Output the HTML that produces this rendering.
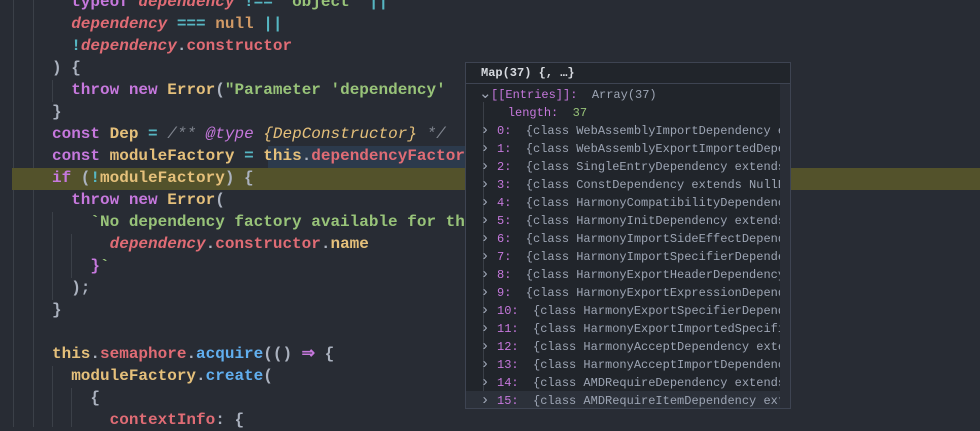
<!DOCTYPE html>
<html><head><meta charset="utf-8"><style>
body{margin:0;width:980px;height:427px;overflow:hidden;background:#282c34;position:relative;font-family:"Liberation Mono",monospace}
.code{position:absolute;left:0;top:-9px;width:980px;font-size:16px;line-height:22px;color:#abb2bf;font-weight:bold}
.l{height:22px;white-space:pre;padding-left:52px;position:relative}
.k{color:#c678dd}.r{color:#e06c75}.y{color:#e5c07b}.g{color:#98c379}.c{color:#56b6c2}.b{color:#61afef}.o{color:#d19a66}.i{font-style:italic}.cm{color:#7f848e;font-style:italic;font-weight:normal}
.guide{position:absolute;width:1px;background:#3b4048}
.hl{position:absolute;left:12px;top:168px;width:968px;height:22px;background:#53522b}
.panel{position:absolute;left:465px;top:62px;width:326px;height:347px;background:#21252b;border:1px solid #3e4452;box-sizing:border-box;font-size:12px;overflow:hidden}
.ph{height:20px;line-height:20px;padding-left:15px;color:#d7dae0;font-weight:bold;border-bottom:1px solid #3e4452;white-space:pre}
.pr{height:18px;line-height:18px;white-space:pre;color:#9da5b4}
.pk{color:#c678dd}
.pn{color:#98c379}
.ar{color:#9da5b4;display:inline-block;width:12px;margin-right:6px;text-align:center;font-size:15px;vertical-align:top}
</style></head><body>
<div class="guide" style="left:13px;top:0;height:427px"></div>
<div class="guide" style="left:33px;top:0;height:427px"></div>
<div class="guide" style="left:52px;top:80px;height:22px"></div>
<div class="guide" style="left:52px;top:212px;height:88px"></div>
<div class="guide" style="left:71px;top:234px;height:44px"></div>
<div class="guide" style="left:52px;top:366px;height:61px"></div>
<div class="guide" style="left:71px;top:388px;height:39px"></div>
<div class="hl"></div>
<div style="position:absolute;left:268px;top:146px;width:200px;height:22px;background:#2c3a4c"></div>
<div class="code">
<div class="l">  <span class="k">typeof</span> <span class="r i">dependency</span> <span class="c">!==</span> <span class="g">"object"</span> <span class="c">||</span></div>
<div class="l">  <span class="r i">dependency</span> <span class="c">===</span> <span class="o">null</span> <span class="c">||</span></div>
<div class="l">  <span class="c">!</span><span class="r i">dependency</span>.<span class="r">constructor</span></div>
<div class="l">) {</div>
<div class="l">  <span class="k">throw</span> <span class="k">new</span> <span class="y">Error</span>(<span class="g">"Parameter 'dependency'</span></div>
<div class="l">}</div>
<div class="l"><span class="k">const</span> <span class="y">Dep</span> <span class="c">=</span> <span class="cm">/** <span class="k">@type</span> <span class="y">{DepConstructor}</span> */</span></div>
<div class="l"><span class="k">const</span> <span class="y">moduleFactory</span> <span class="c">=</span> <span class="y">this</span>.<span class="r">dependencyFactories</span></div>
<div class="l"><span class="k">if</span> (<span class="c">!</span><span class="y">moduleFactory</span>) {</div>
<div class="l">  <span class="k">throw</span> <span class="k">new</span> <span class="y">Error</span>(</div>
<div class="l">    <span class="g">`No dependency factory available for this</span></div>
<div class="l">      <span class="r i">dependency</span>.<span class="r">constructor</span>.<span class="y">name</span></div>
<div class="l">    <span class="k">}</span><span class="g">`</span></div>
<div class="l">  );</div>
<div class="l">}</div>
<div class="l"> </div>
<div class="l"><span class="y">this</span>.<span class="r">semaphore</span>.<span class="b">acquire</span>(() <span class="k">⇒</span> {</div>
<div class="l">  <span class="y">moduleFactory</span>.<span class="b">create</span>(</div>
<div class="l">    {</div>
<div class="l">      <span class="r">contextInfo</span>: {</div>
</div>
<div class="panel">
<div class="ph">Map(37) {, …}</div>
<div style="position:absolute;left:17px;top:39px;width:1px;height:310px;background:#3b4048"></div>
<div style="position:absolute;left:0;top:328px;width:314px;height:18px;background:#2c313a"></div>
<div style="position:absolute;left:0;top:21px;padding-left:13px;padding-top:2px">
<div class="pr"><span class="ar" style="margin-right:0">⌄</span><span class="pk">[[Entries]]:</span>  Array(37)</div>
<div class="pr">    <span class="pk">length:</span>  <span class="pn">37</span></div>
<div class="pr"><span class="ar">›</span><span class="pk">0:</span>  {class WebAssemblyImportDependency ext</div>
<div class="pr"><span class="ar">›</span><span class="pk">1:</span>  {class WebAssemblyExportImportedDepen</div>
<div class="pr"><span class="ar">›</span><span class="pk">2:</span>  {class SingleEntryDependency extends</div>
<div class="pr"><span class="ar">›</span><span class="pk">3:</span>  {class ConstDependency extends NullDe</div>
<div class="pr"><span class="ar">›</span><span class="pk">4:</span>  {class HarmonyCompatibilityDependency</div>
<div class="pr"><span class="ar">›</span><span class="pk">5:</span>  {class HarmonyInitDependency extends</div>
<div class="pr"><span class="ar">›</span><span class="pk">6:</span>  {class HarmonyImportSideEffectDepende</div>
<div class="pr"><span class="ar">›</span><span class="pk">7:</span>  {class HarmonyImportSpecifierDependen</div>
<div class="pr"><span class="ar">›</span><span class="pk">8:</span>  {class HarmonyExportHeaderDependency</div>
<div class="pr"><span class="ar">›</span><span class="pk">9:</span>  {class HarmonyExportExpressionDepende</div>
<div class="pr"><span class="ar">›</span><span class="pk">10:</span>  {class HarmonyExportSpecifierDepende</div>
<div class="pr"><span class="ar">›</span><span class="pk">11:</span>  {class HarmonyExportImportedSpecifie</div>
<div class="pr"><span class="ar">›</span><span class="pk">12:</span>  {class HarmonyAcceptDependency exter</div>
<div class="pr"><span class="ar">›</span><span class="pk">13:</span>  {class HarmonyAcceptImportDependency</div>
<div class="pr"><span class="ar">›</span><span class="pk">14:</span>  {class AMDRequireDependency extends</div>
<div class="pr"><span class="ar">›</span><span class="pk">15:</span>  {class AMDRequireItemDependency exte</div>
</div>
<div style="position:absolute;right:0;top:21px;width:10px;height:325px;background:#292d36"></div>
</div>
</body></html>
